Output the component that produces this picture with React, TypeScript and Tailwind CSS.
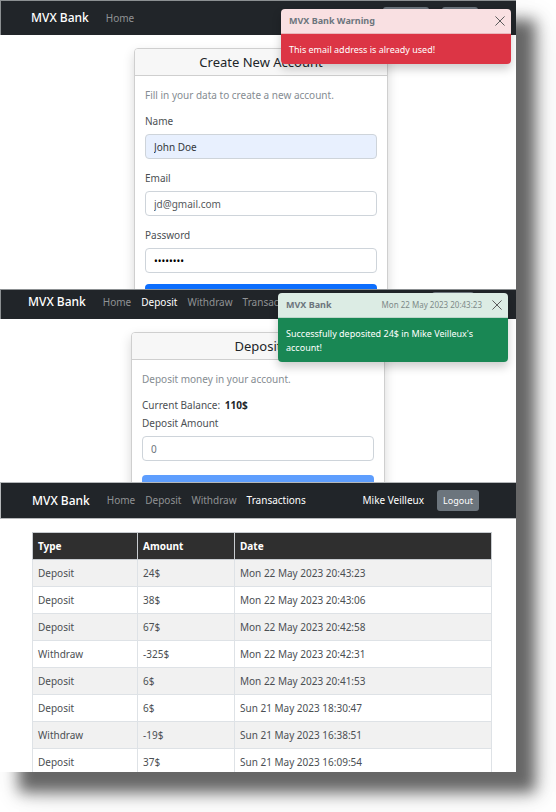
import React from "react";

const LINKS = ["Home", "Deposit", "Withdraw", "Transactions"];

const ROWS = [
  ["Deposit", "24$", "Mon 22 May 2023 20:43:23"],
  ["Deposit", "38$", "Mon 22 May 2023 20:43:06"],
  ["Deposit", "67$", "Mon 22 May 2023 20:42:58"],
  ["Withdraw", "-325$", "Mon 22 May 2023 20:42:31"],
  ["Deposit", "6$", "Mon 22 May 2023 20:41:53"],
  ["Deposit", "6$", "Sun 21 May 2023 18:30:47"],
  ["Withdraw", "-19$", "Sun 21 May 2023 16:38:51"],
  ["Deposit", "37$", "Sun 21 May 2023 16:09:54"],
];

function NavLinks({ links, active }: { links: string[]; active?: string }) {
  return (
    <nav className="ml-[17px] flex gap-[10px]">
      {links.map((l) => (
        <a key={l} href="#" className={l === active ? "text-white" : "text-[#909294]"}>
          {l}
        </a>
      ))}
    </nav>
  );
}

function Brand() {
  return (
    <a href="#" className="text-[12px] font-medium text-white">
      MVX Bank
    </a>
  );
}

function NavButton({ children }: { children: React.ReactNode }) {
  return (
    <button className="h-[21px] rounded-[3px] bg-[#6c757d] px-[6px] text-[9px] text-white">
      {children}
    </button>
  );
}

function Close() {
  return (
    <button aria-label="Close" className="text-[#5c5c5c]">
      <svg width="10" height="10" viewBox="0 0 10 10" fill="none" stroke="currentColor" strokeLinecap="round">
        <path d="M.7.7l8.6 8.6M9.3.7L.7 9.3" />
      </svg>
    </button>
  );
}

function Card({ title, children }: { title: string; children: React.ReactNode }) {
  return (
    <section className="w-[254px] rounded-t-[4px] border border-[#cfcfcf] bg-white shadow-[0_5px_12px_rgba(0,0,0,0.16)]">
      <h2 className="h-[27px] rounded-t-[3px] border-b border-[#cfcfcf] bg-[#f7f7f7] text-center text-[13px] leading-[27px] text-[#212529]">
        {title}
      </h2>
      <div className="px-[10px] pt-[11px]">{children}</div>
    </section>
  );
}

const inputClass =
  "block h-[25px] w-full rounded-[4px] border border-[#ced4da] px-[8px] text-[10px] outline-none";

function Field({ id, label, type, value, look }: { id: string; label: string; type: string; value: string; look: string }) {
  return (
    <div className="mb-[11px]">
      <label htmlFor={id} className="mb-[5px] block leading-4">
        {label}
      </label>
      <input id={id} type={type} defaultValue={value} className={`${inputClass} ${look}`} />
    </div>
  );
}

export default function App() {
  return (
    <div className="bg-white pr-10 pb-10 font-['Noto_Sans',sans-serif] text-[10px] text-[#4b4f53]">
      <main className="bg-white shadow-[19px_20px_14px_#666,22px_22px_30px_rgba(0,0,0,0.12)]">
        <section className="relative h-[289px] overflow-hidden">
          <header className="flex h-[35px] items-center border-t border-l border-[#8c9092] bg-[#212529] pr-[38px] pl-[30px]">
            <Brand />
            <NavLinks links={["Home"]} />
            <div className="ml-auto flex gap-[13px] pb-px">
              <NavButton>Register</NavButton>
              <NavButton>Login</NavButton>
            </div>
          </header>
          <div className="flex justify-center pt-[13px] pl-[6px]">
            <Card title="Create New Account">
              <p className="mb-[10px] leading-4 text-[#858c92]">Fill in your data to create a new account.</p>
              <Field id="name" label="Name" type="text" value="John Doe" look="bg-[#e8f0fe] text-[#33373b]" />
              <Field id="email" label="Email" type="email" value="jd@gmail.com" look="bg-white text-[#55595d]" />
              <Field id="password" label="Password" type="password" value="12345678" look="bg-white text-black" />
              <button aria-label="Register" className="block h-[25px] w-full rounded-[4px] bg-[#0d6efd]" />
            </Card>
          </div>
          <div
            role="alert"
            className="absolute top-[9px] right-[5px] w-[230px] overflow-hidden rounded-[4px] text-[9px] shadow-[0_5px_10px_rgba(0,0,0,0.2)]"
          >
            <div className="flex h-[25px] items-center justify-between border-b border-[#e9b9bd] bg-[#f9e0e2] pr-[6px] pl-[8px]">
              <strong className="text-[#6c757d]">MVX Bank Warning</strong>
              <Close />
            </div>
            <p className="bg-[#dc3545] px-[8px] pt-[9px] pb-[7px] leading-[14px] text-white">This email address is already used!</p>
          </div>
        </section>

        <section className="relative h-[193px] overflow-hidden">
          <header className="flex h-[30px] items-center border-t border-l border-[#8c9092] bg-[#212529] pr-[42px] pb-[5px] pl-[27px]">
            <Brand />
            <NavLinks links={LINKS} active="Deposit" />
            <div className="ml-auto flex">
              <NavButton>Logout</NavButton>
            </div>
          </header>
          <div className="flex justify-center pt-[13px]">
            <Card title="Deposit">
              <p className="mb-[10px] leading-4 text-[#858c92]">Deposit money in your account.</p>
              <p className="mb-[2px] leading-4">
                Current Balance: <b className="ml-[2px] text-[#212529]">110$</b>
              </p>
              <label htmlFor="amount" className="mb-[5px] block leading-4">
                Deposit Amount
              </label>
              <input id="amount" type="text" placeholder="0" className={`${inputClass} placeholder:text-[#6c757d]`} />
              <button aria-label="Deposit" className="mt-[14px] block h-[25px] w-full rounded-[4px] bg-[#5e9efe]" />
            </Card>
          </div>
          <div
            role="status"
            className="absolute top-[4px] right-[8px] w-[230px] overflow-hidden rounded-[4px] text-[9px] shadow-[0_5px_10px_rgba(0,0,0,0.2)]"
          >
            <div className="flex h-[25px] items-center border-b border-[#bcd6ca] bg-[#dcece4] pr-[6px] pl-[8px]">
              <strong className="mr-auto text-[#6c757d]">MVX Bank</strong>
              <small className="mr-[10px] text-[8px] text-[#7d8a88]">Mon 22 May 2023 20:43:23</small>
              <Close />
            </div>
            <p className="bg-[#198754] px-[8px] pt-[9px] pb-[7px] leading-[14px] text-white">
              Successfully deposited 24$ in Mike Veilleux's account!
            </p>
          </div>
        </section>

        <section className="h-[290px] overflow-hidden">
          <header className="flex h-[37px] items-center border-y border-l border-[#b5b8ba] bg-[#212529] pr-[37px] pl-[31px]">
            <Brand />
            <NavLinks links={LINKS} active="Transactions" />
            <div className="ml-auto flex items-center gap-[13px]">
              <span className="text-white">Mike Veilleux</span>
              <NavButton>Logout</NavButton>
            </div>
          </header>
          <div className="pt-[13px] pr-[24px] pl-[32px]">
            <table className="w-full table-fixed border-collapse text-left">
              <thead>
                <tr className="h-[27px] bg-[#2f2f2f] text-white">
                  <th className="w-[105px] border border-[#c8ccd0] px-[5px]">Type</th>
                  <th className="w-[97px] border border-[#c8ccd0] px-[5px]">Amount</th>
                  <th className="border border-[#c8ccd0] px-[5px]">Date</th>
                </tr>
              </thead>
              <tbody>
                {ROWS.map((row) => (
                  <tr key={row[2]} className="h-[27px] odd:bg-[#f1f1f1]">
                    {row.map((cell, i) => (
                      <td key={i} className="border border-[#dee2e6] px-[5px]">
                        {cell}
                      </td>
                    ))}
                  </tr>
                ))}
              </tbody>
            </table>
          </div>
        </section>
      </main>
    </div>
  );
}
